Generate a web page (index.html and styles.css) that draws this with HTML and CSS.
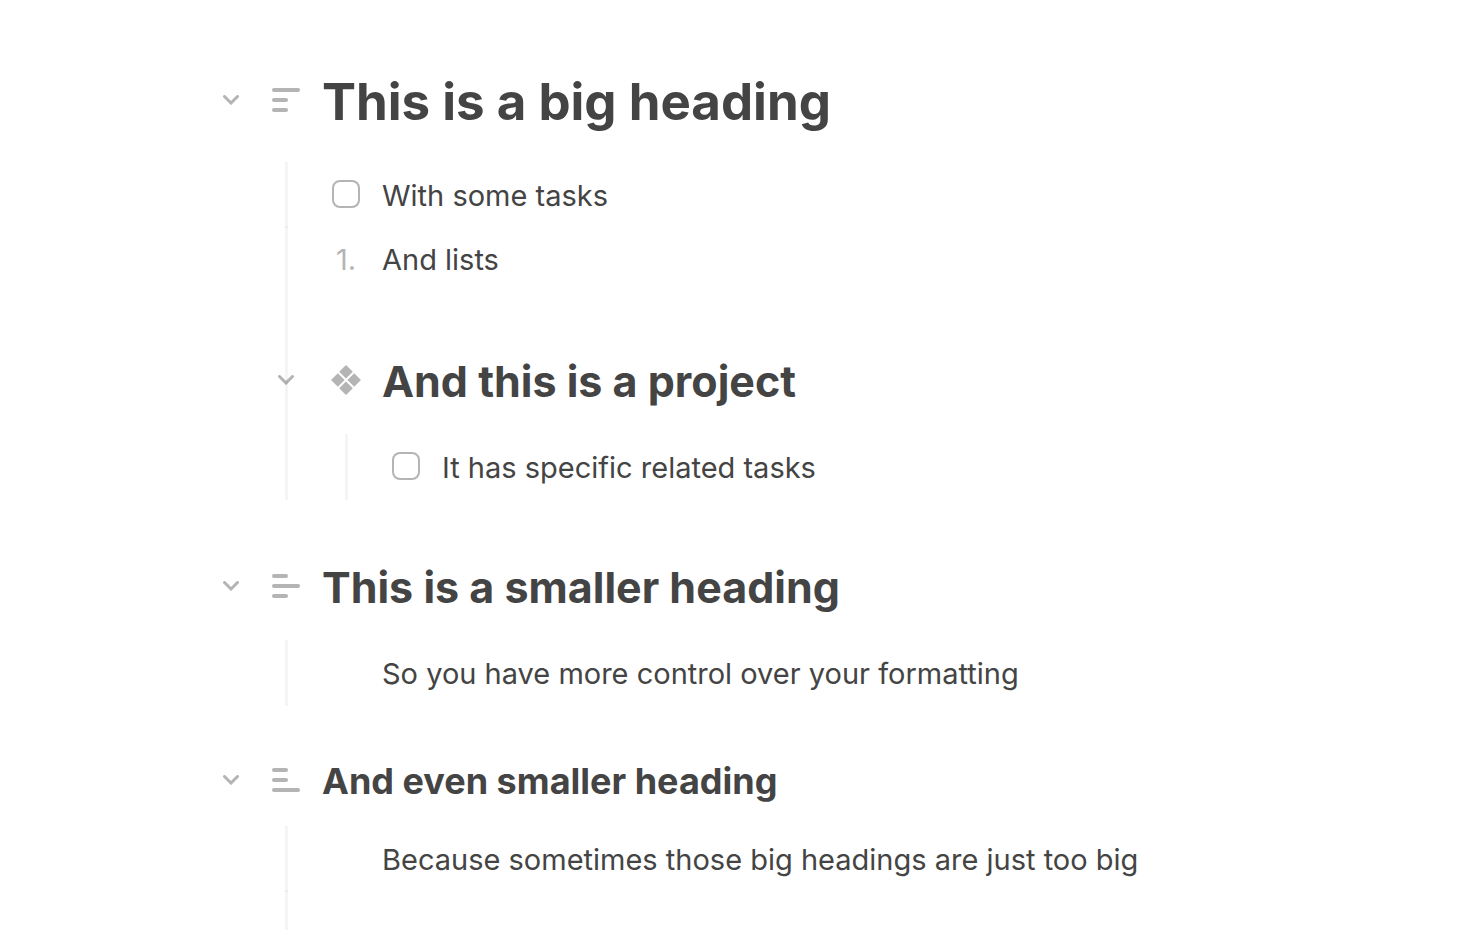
FILE: index.html
```html
<!DOCTYPE html>
<html lang="en">

<head>
    <meta charset="UTF-8">
    <meta name="viewport" content="width=device-width, initial-scale=1.0">
    <title>Outline</title>
    <link rel="stylesheet" href="styles.css">
</head>

<body>
    <main class="note">
        <section class="item">
            <div class="row row-h1">
                <button class="toggle" type="button" aria-label="Collapse">
                    <svg width="16" height="10" viewBox="0 0 16 10"><path d="M1.5 1.5 8 8l6.5-6.5" /></svg>
                </button>
                <svg class="icon" width="28" height="28" viewBox="0 0 28 28"><path d="M2 4h24M2 14h12M2 24h12" /></svg>
                <h1>This is a big heading</h1>
            </div>
            <ul class="children">
                <li>
                    <div class="row">
                        <input class="check" type="checkbox" id="task1">
                        <label class="text" for="task1">With some tasks</label>
                    </div>
                </li>
                <li>
                    <div class="row">
                        <span class="number">1.</span>
                        <span class="text">And lists</span>
                    </div>
                </li>
                <li class="project">
                    <div class="row row-project">
                        <button class="toggle" type="button" aria-label="Collapse">
                            <svg width="16" height="10" viewBox="0 0 16 10"><path d="M1.5 1.5 8 8l6.5-6.5" /></svg>
                        </button>
                        <svg class="icon-project" width="30" height="30" viewBox="0 0 30 30">
                            <path d="M15 0l6.8 6.8L15 13.6 8.2 6.8zM6.8 8.2l6.8 6.8-6.8 6.8L0 15zM23.2 8.2 30 15l-6.8 6.8-6.8-6.8zM15 16.4l6.8 6.8L15 30l-6.8-6.8z" />
                        </svg>
                        <h2>And this is a project</h2>
                    </div>
                    <ul class="children">
                        <li>
                            <div class="row">
                                <input class="check" type="checkbox" id="task2">
                                <label class="text" for="task2">It has specific related tasks</label>
                            </div>
                        </li>
                    </ul>
                </li>
            </ul>
        </section>

        <section class="item">
            <div class="row row-h2">
                <button class="toggle" type="button" aria-label="Collapse">
                    <svg width="16" height="10" viewBox="0 0 16 10"><path d="M1.5 1.5 8 8l6.5-6.5" /></svg>
                </button>
                <svg class="icon" width="28" height="28" viewBox="0 0 28 28"><path d="M2 4h12M2 14h24M2 24h12" /></svg>
                <h2>This is a smaller heading</h2>
            </div>
            <ul class="children">
                <li>
                    <div class="row">
                        <span class="text">So you have more control over your formatting</span>
                    </div>
                </li>
            </ul>
        </section>

        <section class="item">
            <div class="row row-h3">
                <button class="toggle" type="button" aria-label="Collapse">
                    <svg width="16" height="10" viewBox="0 0 16 10"><path d="M1.5 1.5 8 8l6.5-6.5" /></svg>
                </button>
                <svg class="icon" width="28" height="28" viewBox="0 0 28 28"><path d="M2 4h12M2 14h12M2 24h24" /></svg>
                <h3>And even smaller heading</h3>
            </div>
            <ul class="children">
                <li>
                    <div class="row">
                        <span class="text">Because sometimes those big headings are just too big</span>
                    </div>
                </li>
                <li>
                    <div class="row"></div>
                </li>
            </ul>
        </section>
    </main>
</body>

</html>
```
FILE: styles.css
```css
* {
    box-sizing: border-box;
}

body {
    margin: 0;
    height: 100vh;
    overflow-y: auto;
    scrollbar-width: none;
    background: white;
    color: #444;
    font-family: Inter, sans-serif;
    font-size: 29px;
}

.note {
    max-width: 1070px;
    margin: 0 auto;
    padding-top: 38px;
}

h1,
h2,
h3 {
    grid-column: 3;
    margin: 0;
    padding-top: 2px;
    font-weight: 700;
}

h1 {
    font-size: 51px;
}

h2 {
    font-size: 43px;
}

h3 {
    font-size: 36px;
}

/* toggle | bullet | text */
.row {
    display: grid;
    grid-template-columns: 60px 60px 1fr;
    align-items: center;
    min-height: 64px;
}

.row-h1 {
    min-height: 124px;
}

.row-project {
    min-height: 144px;
    padding-top: 36px;
}

.row-h2 {
    min-height: 142px;
    padding-top: 34px;
}

.row-h3 {
    min-height: 122px;
    padding-top: 30px;
}

.row h1,
.row h2,
.row h3,
.text {
    padding-left: 6px;
}

.text {
    grid-column: 3;
    padding-top: 2px;
}

.toggle {
    grid-column: 1;
    justify-self: center;
    display: flex;
    padding: 8px;
    border: 0;
    background: none;
    cursor: pointer;
}

.item > .row > .toggle {
    margin-left: 10px;
}

.toggle svg,
.icon {
    fill: none;
    stroke: #b4b4b4;
    stroke-width: 4;
    stroke-linecap: round;
}

.toggle svg {
    stroke-width: 3;
}

.icon,
.icon-project,
.check,
.number {
    grid-column: 2;
    justify-self: center;
}

.icon-project {
    fill: #b4b4b4;
}

.check {
    appearance: none;
    width: 28px;
    height: 28px;
    margin: 0;
    border: 2px solid #b4b4b4;
    border-radius: 8px;
}

.number {
    padding-top: 2px;
    color: #b4b4b4;
}

.children {
    margin: 0;
    padding: 0 0 0 60px;
    list-style: none;
}

.children > li {
    position: relative;
}

/* guide line, runs slightly into the next item */
.children > li::before {
    content: "";
    position: absolute;
    top: 0;
    bottom: -2px;
    left: 29px;
    width: 3px;
    background: rgba(0, 0, 0, 0.04);
}

.children > .project::before {
    top: 2px;
}
```
